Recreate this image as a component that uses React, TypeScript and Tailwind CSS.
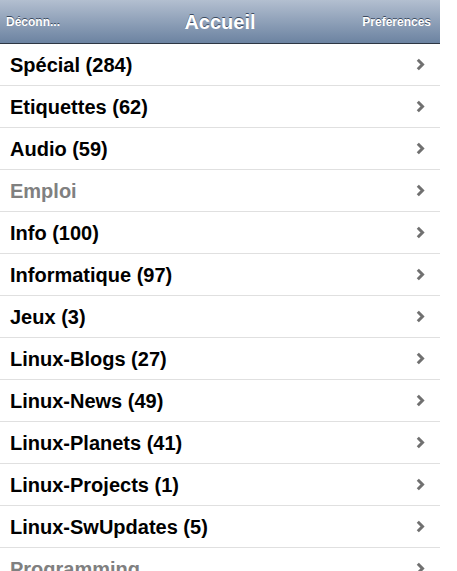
const items: { label: string; disabled?: boolean }[] = [
  { label: "Spécial (284)" },
  { label: "Etiquettes (62)" },
  { label: "Audio (59)" },
  { label: "Emploi", disabled: true },
  { label: "Info (100)" },
  { label: "Informatique (97)" },
  { label: "Jeux (3)" },
  { label: "Linux-Blogs (27)" },
  { label: "Linux-News (49)" },
  { label: "Linux-Planets (41)" },
  { label: "Linux-Projects (1)" },
  { label: "Linux-SwUpdates (5)" },
  { label: "Programming", disabled: true },
];

function Chevron() {
  return (
    <svg width="9" height="13" viewBox="0 0 9 13" className="shrink-0">
      <path d="M1.8 1.8 L6.5 6.5 L1.8 11.2" fill="none" stroke="#707070" strokeWidth="3" />
    </svg>
  );
}

export default function App() {
  return (
    <div className="h-[571px] w-[440px] overflow-hidden bg-white font-['Liberation_Sans',Arial,sans-serif]">
      <header className="relative flex h-[44px] items-center justify-between border-b border-[#2d3642] bg-gradient-to-b from-[#b3bfd0] to-[#6c83a1] pl-[6px] pr-[9px] text-white [text-shadow:0_-1px_0_#3b4a5f]">
        <span className="text-[12px] font-bold">Déconn...</span>
        <h1 className="absolute left-1/2 -translate-x-1/2 text-[20px] font-bold">Accueil</h1>
        <span className="text-[12px] font-bold">Preferences</span>
      </header>
      <ul>
        {items.map((item) => (
          <li
            key={item.label}
            className="flex h-[42px] items-center justify-between border-b border-[#e0e0e0] pl-[10px] pr-[15px]"
          >
            <span className={`text-[20px] font-bold ${item.disabled ? "text-[#808080]" : "text-black"}`}>
              {item.label}
            </span>
            <Chevron />
          </li>
        ))}
      </ul>
    </div>
  );
}
